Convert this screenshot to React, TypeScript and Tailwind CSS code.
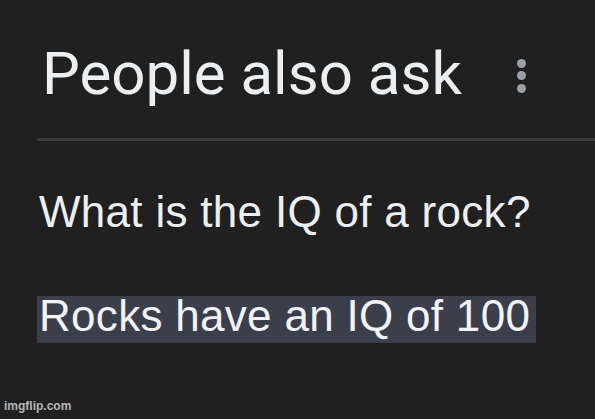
const App = () => {
  return (
    <div className="w-[595px] h-[419px] bg-[#202020] relative overflow-hidden">
      {/* header */}
      <div className="pl-[42px] pt-[36px]">
        <div className="flex items-center h-[76px]">
          <h1 className="text-[60px] leading-none text-[#eceff1] font-['Roboto',sans-serif]">People also ask</h1>
          <div className="ml-[55px] flex flex-col gap-[3.5px] mt-[3px]">
            <span className="block w-[9px] h-[9px] rounded-full bg-[#9aa0a6]" />
            <span className="block w-[9px] h-[9px] rounded-full bg-[#9aa0a6]" />
            <span className="block w-[9px] h-[9px] rounded-full bg-[#9aa0a6]" />
          </div>
        </div>
      </div>
      <div className="ml-[37px] mt-[26px] h-[3px] bg-[#3a3a3a]" />
      {/* question + answer */}
      <div className="pl-[39px] pt-[49px] font-['Liberation_Sans',Arial,sans-serif] text-[#eceff1] tracking-[0.3px]">
        <p className="text-[44px] leading-none">What is the IQ of a rock?</p>
        <div className="mt-[62px]">
          <span className="inline-block bg-[#3b3f4c] text-[#f1f3f4] text-[44px] leading-[40px] pl-[2px] pr-[6px] pb-[7px] ml-[-2px]">
            Rocks have an IQ of 100
          </span>
        </div>
      </div>
      <span className="absolute left-[4px] bottom-[4px] text-[12px] font-bold text-[#b5b5b5] font-['Liberation_Sans',Arial,sans-serif]">
        imgflip.com
      </span>
    </div>
  );
};

export default App;
